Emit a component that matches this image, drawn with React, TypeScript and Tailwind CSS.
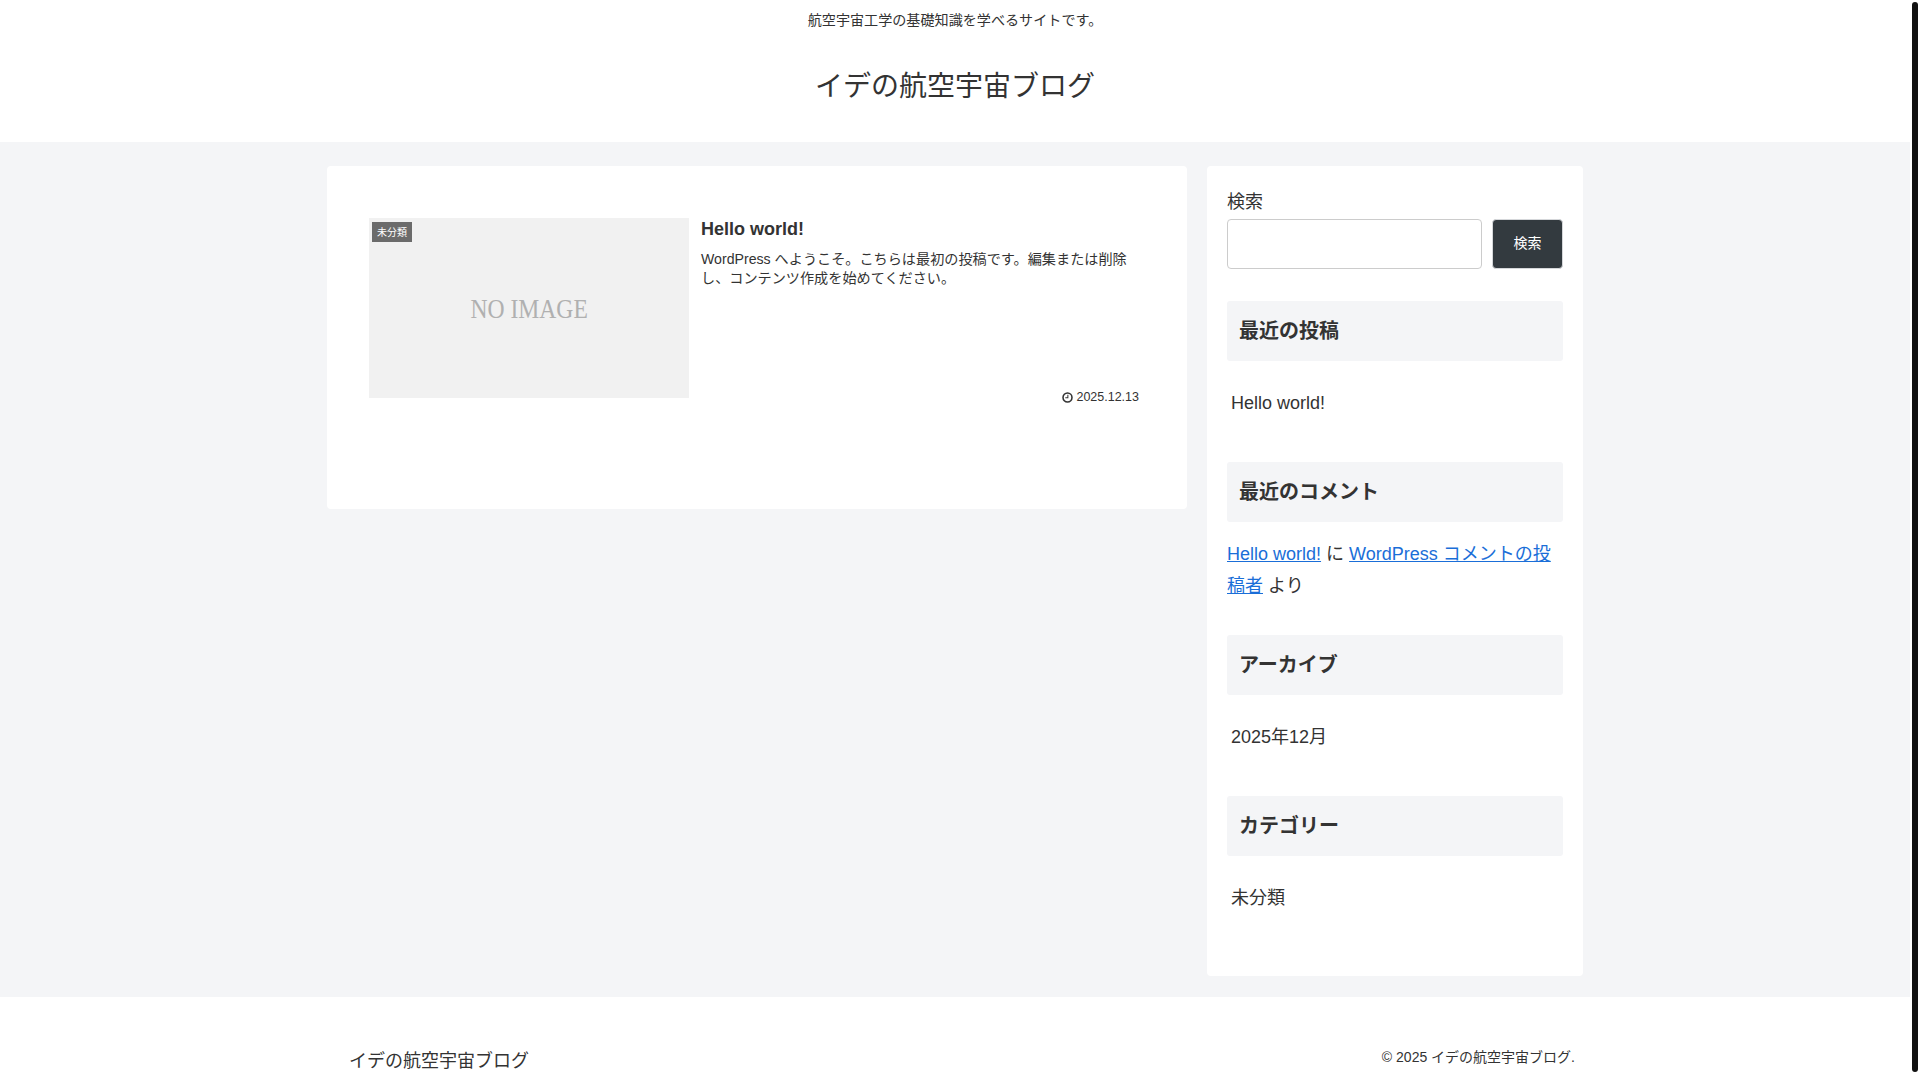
import React from 'react';

const FONT = "font-['Liberation_Sans','Noto_Sans_CJK_JP',sans-serif]";

function ClockIcon() {
  return (
    <svg viewBox="0 0 12 12" className="w-[11px] h-[11px]" fill="none" stroke="#333">
      <circle cx="6" cy="6" r="4.9" strokeWidth="1.7" />
      <path d="M6.4 3v3.4H3.6" strokeWidth="1.1" />
    </svg>
  );
}

function WidgetTitle({ children }: { children: React.ReactNode }) {
  return (
    <h3 className="h-[60px] flex items-center px-[12px] bg-[#f4f5f7] rounded-[3px] text-[20px] font-bold text-[#333]">
      {children}
    </h3>
  );
}

function WidgetLink({ children }: { children: React.ReactNode }) {
  return <div className="h-[32px] mt-[26px] mb-[43px] pl-[4px] flex items-center text-[18px] text-[#333]">{children}</div>;
}

export default function App() {
  return (
    <div className={`${FONT} flex h-screen overflow-hidden bg-white text-[#333]`}>
      <div className="w-[1910px] shrink-0">
        {/* Header */}
        <header className="h-[142px] bg-white text-center">
          <p className="pt-[10px] text-[14.1px] leading-[20px]">航空宇宙工学の基礎知識を学べるサイトです。</p>
          <div className="mt-[36px] text-[28px] leading-[42px]">イデの航空宇宙ブログ</div>
        </header>

        {/* Content */}
        <div className="bg-[#f4f5f7] h-[855px] pt-[24px]">
          <div className="w-[1256px] mx-auto flex gap-[20px] items-start">
            <main className="w-[860px] h-[343px] bg-white rounded-[4px] pt-[52px] pl-[42px] pr-[48px]">
              <article className="flex gap-[12px]">
                <div className="relative w-[320px] h-[180px] shrink-0 bg-[#f1f1f1] flex items-center justify-center">
                  <span className="absolute left-[3px] top-[4px] w-[40px] h-[20px] bg-[#6b6b6b] text-white text-[10px] flex items-center justify-center">
                    未分類
                  </span>
                  <span className="inline-block scale-x-[0.875] font-['Liberation_Serif',serif] text-[27px] text-[#b0b0b0] mt-[2px]">NO IMAGE</span>
                </div>
                <div className="flex-1 flex flex-col">
                  <h2 className="text-[18px] font-bold leading-[22px] mb-[10px]">Hello world!</h2>
                  <p className="text-[14.15px] leading-[19px] pr-[11px]">
                    WordPress へようこそ。こちらは最初の投稿です。編集または削除し、コンテンツ作成を始めてください。
                  </p>
                  <div className="mt-auto -mb-[7px] flex items-center justify-end gap-[3px] text-[12.5px] leading-[16px]">
                    <ClockIcon />
                    <span>2025.12.13</span>
                  </div>
                </div>
              </article>
            </main>

            <aside className="w-[376px] h-[810px] bg-white rounded-[4px] px-[20px] pt-[23px]">
              <label className="block text-[18px] leading-[27px] mb-[3px]">検索</label>
              <div className="flex gap-[10px] mb-[32px]">
                <input className="w-[255px] h-[50px] bg-white border border-[#ccc] rounded-[4px]" />
                <button className="w-[71px] h-[50px] pb-[2px] bg-[#333a3f] border border-[#d5d7da] rounded-[4px] text-white text-[14px]">検索</button>
              </div>

              <WidgetTitle>最近の投稿</WidgetTitle>
              <WidgetLink>Hello world!</WidgetLink>

              <WidgetTitle>最近のコメント</WidgetTitle>
              <p className="mt-[16px] mb-[33px] text-[18px] leading-[32px]">
                <a href="#" className="text-[#1a6ed8] underline">Hello world!</a> に{' '}
                <a href="#" className="text-[#1a6ed8] underline">WordPress コメントの投稿者</a> より
              </p>

              <WidgetTitle>アーカイブ</WidgetTitle>
              <WidgetLink>2025年12月</WidgetLink>

              <WidgetTitle>カテゴリー</WidgetTitle>
              <WidgetLink>未分類</WidgetLink>
            </aside>
          </div>
        </div>

        {/* Footer */}
        <footer className="bg-white">
          <div className="w-[1256px] mx-auto pl-[22px] pr-[8px] pt-[51px] flex justify-between">
            <div className="text-[18px] leading-[27px]">イデの航空宇宙ブログ</div>
            <div className="-mt-[1px] text-[14px] leading-[20px]">© 2025 イデの航空宇宙ブログ.</div>
          </div>
        </footer>
      </div>

      {/* Scrollbar */}
      <div className="w-[10px] h-full bg-white px-[2px] pt-[2px]">
        <div className="h-[1070px] bg-[#111] rounded-[3px]" />
      </div>
    </div>
  );
}
